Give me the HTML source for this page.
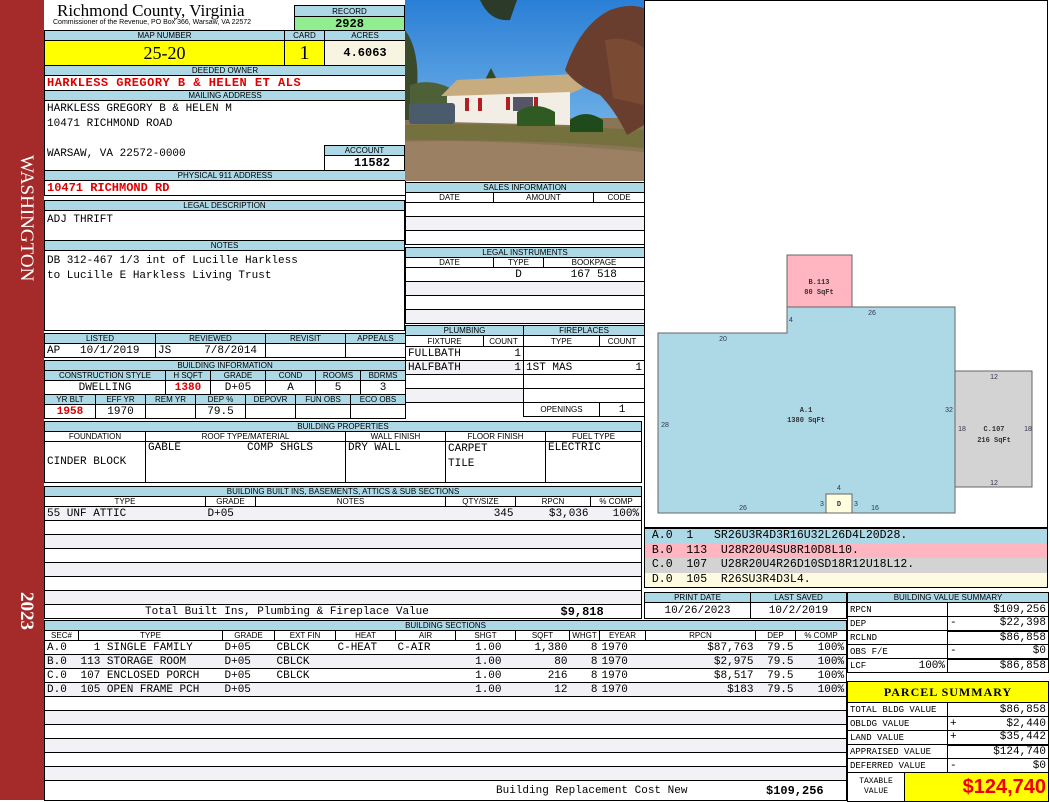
<!DOCTYPE html>
<html><head><meta charset="utf-8"><style>
*{margin:0;padding:0;box-sizing:border-box}
body{width:1050px;height:800px;position:relative;background:#fff;overflow:hidden;font-family:"Liberation Mono",monospace;font-size:11px;color:#000}
.a{position:absolute}
table{position:absolute;border-collapse:collapse;table-layout:fixed}
td{border:1px solid #000;padding:0 2px;overflow:hidden;white-space:nowrap;font-family:"Liberation Mono",monospace;font-size:11px;line-height:12px;vertical-align:middle}
tr.h td,td.h{background:#add8e6;font:8px/9px "Liberation Sans",sans-serif;text-align:center;padding:0}
.r{text-align:right}.c{text-align:center}
.red{color:#d00;font-weight:bold}
.g td{background:#f1f1f6}
.bs td{border-left:0;border-right:0}
.bs td:first-child{border-left:1px solid #000}
.bs td:last-child{border-right:1px solid #000}
</style></head><body>
<div class="a" style="left:0;top:0;width:44px;height:800px;background:#a52a2a"></div>
<div class="a" style="left:8px;top:155px;width:30px;height:170px;"><div style="transform:rotate(90deg);transform-origin:0 0;position:absolute;left:29px;top:0;width:170px;color:#fff;font:19px 'Liberation Serif',serif;white-space:nowrap">WASHINGTON</div></div>
<div class="a" style="left:8px;top:592px;width:30px;height:40px;"><div style="transform:rotate(90deg);transform-origin:0 0;position:absolute;left:29px;top:0;color:#fff;font:bold 19px 'Liberation Serif',serif;white-space:nowrap">2023</div></div>

<div class="a" style="left:57px;top:1px;font:17px 'Liberation Serif',serif">Richmond County, Virginia</div>
<div class="a" style="left:53px;top:19px;font:7px 'Liberation Sans',sans-serif;white-space:nowrap">Commissioner of the Revenue, PO Box 366, Warsaw, VA 22572</div>
<table style="left:294px;top:5px;width:111px"><tr class="h" style="height:11px"><td>RECORD</td></tr><tr style="height:14px"><td class="c" style="background:#90ee90;font-weight:bold;font-size:12px">2928</td></tr></table>

<table style="left:44px;top:30px;width:361px">
<colgroup><col style="width:240px"><col style="width:40px"><col style="width:81px"></colgroup>
<tr class="h" style="height:10px"><td>MAP NUMBER</td><td>CARD</td><td>ACRES</td></tr>
<tr style="height:25px"><td class="c" style="background:#ff0;font:18px 'Liberation Serif',serif">25-20</td><td class="c" style="background:#ff0;font:20px 'Liberation Serif',serif">1</td><td class="c" style="background:#f7f5e2;font-weight:bold;font-size:12px">4.6063</td></tr>
<tr class="h" style="height:10px"><td colspan="3">DEEDED OWNER</td></tr>
<tr style="height:15px"><td colspan="3" class="red" style="font-size:12px;letter-spacing:.5px">HARKLESS GREGORY B &amp; HELEN ET ALS</td></tr>
<tr class="h" style="height:10px"><td colspan="3">MAILING ADDRESS</td></tr>
<tr style="height:70px"><td colspan="3"></td></tr>
<tr class="h" style="height:10px"><td colspan="3">PHYSICAL 911 ADDRESS</td></tr>
<tr style="height:15px"><td colspan="3" class="red" style="font-size:12px">10471 RICHMOND RD</td></tr>
</table>
<div class="a" style="left:47px;top:102px;line-height:15px;white-space:pre">HARKLESS GREGORY B &amp; HELEN M
10471 RICHMOND ROAD

WARSAW, VA 22572-0000</div>
<table style="left:324px;top:145px;width:81px"><tr class="h" style="height:10px"><td>ACCOUNT</td></tr><tr style="height:15px"><td class="r" style="font-weight:bold;font-size:12px;padding-right:14px">11582</td></tr></table>

<table style="left:44px;top:200px;width:361px">
<tr class="h" style="height:10px"><td>LEGAL DESCRIPTION</td></tr>
<tr style="height:30px"><td style="vertical-align:top;padding-top:3px">ADJ THRIFT</td></tr>
<tr class="h" style="height:10px"><td>NOTES</td></tr>
<tr style="height:80px"><td style="vertical-align:top;padding-top:3px;line-height:15px">DB 312-467 1/3 int of Lucille Harkless<br>to Lucille E Harkless Living Trust</td></tr>
</table>

<table style="left:44px;top:333px;width:361px">
<colgroup><col style="width:111px"><col style="width:110px"><col style="width:80px"><col style="width:60px"></colgroup>
<tr class="h" style="height:10px"><td>LISTED</td><td>REVIEWED</td><td>REVISIT</td><td>APPEALS</td></tr>
<tr style="height:14px"><td>AP&nbsp;&nbsp;&nbsp;10/1/2019</td><td>JS&nbsp;&nbsp;&nbsp;&nbsp;&nbsp;7/8/2014</td><td></td><td></td></tr>
</table>

<table style="left:44px;top:360px;width:361px">
<colgroup><col style="width:121px"><col style="width:45px"><col style="width:55px"><col style="width:50px"><col style="width:45px"><col style="width:45px"></colgroup>
<tr class="h" style="height:10px"><td colspan="6">BUILDING INFORMATION</td></tr>
<tr class="h" style="height:10px"><td>CONSTRUCTION STYLE</td><td>H SQFT</td><td>GRADE</td><td>COND</td><td>ROOMS</td><td>BDRMS</td></tr>
<tr style="height:14px"><td class="c">DWELLING</td><td class="c red">1380</td><td class="c">D+05</td><td class="c">A</td><td class="c">5</td><td class="c">3</td></tr>
</table>
<table style="left:44px;top:394px;width:361px">
<colgroup><col style="width:51px"><col style="width:50px"><col style="width:50px"><col style="width:50px"><col style="width:50px"><col style="width:55px"><col style="width:55px"></colgroup>
<tr class="h" style="height:10px"><td>YR BLT</td><td>EFF YR</td><td>REM YR</td><td>DEP %</td><td>DEPOVR</td><td>FUN OBS</td><td>ECO OBS</td></tr>
<tr style="height:14px"><td class="c red">1958</td><td class="c">1970</td><td></td><td class="c">79.5</td><td></td><td></td><td></td></tr>
</table>

<!-- photo -->
<svg class="a" style="left:405px;top:0" width="239" height="181" viewBox="0 0 239 181">
<defs><linearGradient id="sk" x1="0" y1="0" x2="0" y2="1"><stop offset="0" stop-color="#2a7fd6"/><stop offset="1" stop-color="#8cc4ee"/></linearGradient></defs>
<rect width="239" height="181" fill="url(#sk)"/>
<rect y="118" width="239" height="63" fill="#8a7556"/>
<path d="M0 125 Q80 122 239 130 L239 148 Q150 140 0 140Z" fill="#75713e"/>
<path d="M0 142 Q80 138 239 152 L239 181 L0 181Z" fill="#9c8063"/>
<path d="M0 30 Q15 50 12 90 L5 120 L0 120Z" fill="#3a4a2a"/>
<path d="M5 85 Q25 78 45 88 L45 112 L5 112Z" fill="#4d6038"/>
<path d="M80 80 L86 68 L92 80 Z" fill="#2f4a28"/>
<path d="M75 0 Q85 22 105 20 L112 0Z" fill="#2c3a2a"/>
<polygon points="36,96 52,80 170,74 178,88 160,96" fill="#c6ac7e"/>
<polygon points="42,96 165,92 165,125 42,122" fill="#f2eee6"/>
<rect x="60" y="98" width="4" height="13" fill="#b02020"/><rect x="73" y="98" width="4" height="13" fill="#b02020"/>
<rect x="101" y="97" width="4" height="13" fill="#b02020"/><rect x="129" y="97" width="4" height="13" fill="#b02020"/>
<rect x="108" y="97" width="20" height="14" fill="#556"/>
<rect x="4" y="103" width="46" height="21" rx="3" fill="#4a5c6c"/>
<path d="M112 112 Q130 100 150 112 L150 126 L112 126Z" fill="#2f5a22"/>
<path d="M165 120 Q180 108 198 120 L198 132 L165 132Z" fill="#1f4a1c"/>
<path d="M160 70 Q175 25 205 10 Q225 3 239 8 L239 125 L222 135 Q210 110 195 95 Q170 85 160 70Z" fill="#6a3e2e"/>
<path d="M200 40 Q222 35 239 48 L239 105 L208 98Z" fill="#7a4a32"/>
</svg>

<table style="left:405px;top:182px;width:239px">
<colgroup><col style="width:88px"><col style="width:100px"><col style="width:51px"></colgroup>
<tr class="h" style="height:10px"><td colspan="3">SALES INFORMATION</td></tr>
<tr class="h" style="height:10px;"><td style="background:#fff">DATE</td><td style="background:#fff">AMOUNT</td><td style="background:#fff">CODE</td></tr>
<tr style="height:14px"><td colspan="3"></td></tr>
<tr class="g" style="height:14px"><td colspan="3"></td></tr>
<tr style="height:14px"><td colspan="3"></td></tr>
</table>
<table style="left:405px;top:247px;width:239px">
<colgroup><col style="width:88px"><col style="width:50px"><col style="width:101px"></colgroup>
<tr class="h" style="height:10px"><td colspan="3">LEGAL INSTRUMENTS</td></tr>
<tr class="h" style="height:10px"><td style="background:#fff">DATE</td><td style="background:#fff">TYPE</td><td style="background:#fff">BOOKPAGE</td></tr>
<tr style="height:14px"><td style="border-right:0"></td><td class="c" style="border-right:0;border-left:0">D</td><td class="c" style="border-left:0">167 518</td></tr>
<tr class="g" style="height:14px"><td colspan="3"></td></tr>
<tr style="height:14px"><td colspan="3"></td></tr>
<tr class="g" style="height:14px"><td colspan="3"></td></tr>
</table>
<table style="left:405px;top:325px;width:118px">
<colgroup><col style="width:78px"><col style="width:40px"></colgroup>
<tr class="h" style="height:10px"><td colspan="2">PLUMBING</td></tr>
<tr class="h" style="height:11px"><td style="background:#fff">FIXTURE</td><td style="background:#fff">COUNT</td></tr>
<tr style="height:14px"><td style="border-right:0">FULLBATH</td><td class="r" style="border-left:0">1</td></tr>
<tr class="g" style="height:14px"><td style="border-right:0">HALFBATH</td><td class="r" style="border-left:0">1</td></tr>
<tr style="height:14px"><td colspan="2"></td></tr>
<tr class="g" style="height:14px"><td colspan="2"></td></tr>
<tr style="height:14px"><td colspan="2" style="border:0"></td></tr>
</table>
<table style="left:523px;top:325px;width:121px">
<colgroup><col style="width:76px"><col style="width:45px"></colgroup>
<tr class="h" style="height:10px"><td colspan="2">FIREPLACES</td></tr>
<tr class="h" style="height:11px"><td style="background:#fff">TYPE</td><td style="background:#fff">COUNT</td></tr>
<tr style="height:14px"><td colspan="2"></td></tr>
<tr style="height:14px"><td style="border-right:0">1ST MAS</td><td class="r" style="border-left:0">1</td></tr>
<tr style="height:14px"><td colspan="2"></td></tr>
<tr style="height:14px"><td colspan="2"></td></tr>
<tr style="height:14px"><td class="h" style="background:#fff">OPENINGS</td><td class="c">1</td></tr>
</table>

<table style="left:44px;top:421px;width:597px">
<colgroup><col style="width:101px"><col style="width:200px"><col style="width:100px"><col style="width:100px"><col style="width:96px"></colgroup>
<tr class="h" style="height:10px"><td colspan="5">BUILDING PROPERTIES</td></tr>
<tr class="h" style="height:10px"><td style="background:#fff">FOUNDATION</td><td style="background:#fff">ROOF TYPE/MATERIAL</td><td style="background:#fff">WALL FINISH</td><td style="background:#fff">FLOOR FINISH</td><td style="background:#fff">FUEL TYPE</td></tr>
<tr style="height:41px"><td>CINDER BLOCK</td><td style="vertical-align:top;white-space:pre">GABLE          COMP SHGLS</td><td style="vertical-align:top">DRY WALL</td><td style="vertical-align:top;line-height:15px">CARPET<br>TILE</td><td style="vertical-align:top">ELECTRIC</td></tr>
</table>

<table style="left:44px;top:486px;width:597px">
<colgroup><col style="width:161px"><col style="width:50px"><col style="width:190px"><col style="width:70px"><col style="width:75px"><col style="width:51px"></colgroup>
<tr class="h" style="height:10px"><td colspan="6">BUILDING BUILT INS, BASEMENTS, ATTICS &amp; SUB SECTIONS</td></tr>
<tr class="h" style="height:10px"><td style="background:#fff">TYPE</td><td style="background:#fff">GRADE</td><td style="background:#fff">NOTES</td><td style="background:#fff">QTY/SIZE</td><td style="background:#fff">RPCN</td><td style="background:#fff">% COMP</td></tr>
<tr class="g" style="height:14px"><td style="border-right:0">55 UNF ATTIC</td><td colspan="2" style="border-left:0;border-right:0">D+05</td><td class="r" style="border-left:0;border-right:0">345</td><td class="r" style="border-left:0;border-right:0">$3,036</td><td class="r" style="border-left:0">100%</td></tr>
<tr style="height:14px"><td colspan="6"></td></tr>
<tr class="g" style="height:14px"><td colspan="6"></td></tr>
<tr style="height:14px"><td colspan="6"></td></tr>
<tr class="g" style="height:14px"><td colspan="6"></td></tr>
<tr style="height:14px"><td colspan="6"></td></tr>
<tr class="g" style="height:14px"><td colspan="6"></td></tr>
<tr style="height:14px"><td colspan="4" style="border-right:0;padding-left:100px">Total Built Ins, Plumbing &amp; Fireplace Value</td><td colspan="2" style="border-left:0;font-weight:bold;font-size:12px;padding-left:45px">$9,818</td></tr>
</table>

<table class="bs" style="left:44px;top:620px;width:802px">
<colgroup><col style="width:34px"><col style="width:144px"><col style="width:52px"><col style="width:61px"><col style="width:60px"><col style="width:60px"><col style="width:60px"><col style="width:54px"><col style="width:30px"><col style="width:46px"><col style="width:110px"><col style="width:40px"><col style="width:51px"></colgroup>
<tr class="h" style="height:10px"><td colspan="13" style="border:1px solid #000">BUILDING SECTIONS</td></tr>
<tr class="h" style="height:10px"><td style="background:#fff;border:1px solid #000">SEC#</td><td style="background:#fff;border:1px solid #000">TYPE</td><td style="background:#fff;border:1px solid #000">GRADE</td><td style="background:#fff;border:1px solid #000">EXT FIN</td><td style="background:#fff;border:1px solid #000">HEAT</td><td style="background:#fff;border:1px solid #000">AIR</td><td style="background:#fff;border:1px solid #000">SHGT</td><td style="background:#fff;border:1px solid #000">SQFT</td><td style="background:#fff;border:1px solid #000">WHGT</td><td style="background:#fff;border:1px solid #000">EYEAR</td><td style="background:#fff;border:1px solid #000">RPCN</td><td style="background:#fff;border:1px solid #000">DEP</td><td style="background:#fff;border:1px solid #000">% COMP</td></tr>
<tr style="height:14px"><td>A.0</td><td style="white-space:pre">  1 SINGLE FAMILY</td><td>D+05</td><td>CBLCK</td><td>C-HEAT</td><td>C-AIR</td><td class="r" style="padding-right:14px">1.00</td><td class="r">1,380</td><td class="r">8</td><td>1970</td><td class="r">$87,763</td><td class="r">79.5</td><td class="r">100%</td></tr>
<tr class="g" style="height:14px"><td>B.0</td><td>113 STORAGE ROOM</td><td>D+05</td><td>CBLCK</td><td></td><td></td><td class="r" style="padding-right:14px">1.00</td><td class="r">80</td><td class="r">8</td><td>1970</td><td class="r">$2,975</td><td class="r">79.5</td><td class="r">100%</td></tr>
<tr style="height:14px"><td>C.0</td><td>107 ENCLOSED PORCH</td><td>D+05</td><td>CBLCK</td><td></td><td></td><td class="r" style="padding-right:14px">1.00</td><td class="r">216</td><td class="r">8</td><td>1970</td><td class="r">$8,517</td><td class="r">79.5</td><td class="r">100%</td></tr>
<tr class="g" style="height:14px"><td>D.0</td><td>105 OPEN FRAME PCH</td><td>D+05</td><td></td><td></td><td></td><td class="r" style="padding-right:14px">1.00</td><td class="r">12</td><td class="r">8</td><td>1970</td><td class="r">$183</td><td class="r">79.5</td><td class="r">100%</td></tr>
<tr style="height:14px"><td colspan="13"></td></tr>
<tr class="g" style="height:14px"><td colspan="13"></td></tr>
<tr style="height:14px"><td colspan="13"></td></tr>
<tr class="g" style="height:14px"><td colspan="13"></td></tr>
<tr style="height:14px"><td colspan="13"></td></tr>
<tr class="g" style="height:14px"><td colspan="13"></td></tr>
<tr style="height:20px"><td colspan="13"></td></tr>
</table>
<div class="a" style="left:496px;top:785px;white-space:pre">Building Replacement Cost New</div>
<div class="a" style="left:766px;top:784px;font-weight:bold;font-size:12px">$109,256</div>

<!-- sketch -->
<div class="a" style="left:644px;top:0;width:404px;height:528px;border:1px solid #000"></div>
<svg class="a" style="left:644px;top:0" width="404" height="528" viewBox="644 0 404 528" font-family="Liberation Sans, sans-serif">
<rect x="787" y="255" width="65" height="52" fill="#ffb6c1" stroke="#666"/>
<polygon points="658,333 787,333 787,307 955,307 955,513 658,513" fill="#add8e6" stroke="#666"/>
<rect x="955" y="371" width="77" height="116" fill="#d3d3d3" stroke="#666"/>
<rect x="826" y="494" width="26" height="19" fill="#ffffe0" stroke="#666"/>
<g font-size="7" fill="#333" font-family="Liberation Mono, monospace" font-weight="bold" text-anchor="middle">
<text x="819" y="284">B.113</text><text x="819" y="294">80 SqFt</text>
<text x="806" y="412">A.1</text><text x="806" y="422">1380 SqFt</text>
<text x="994" y="431">C.107</text><text x="994" y="442">216 SqFt</text>
<text x="839" y="506">D</text></g>
<g font-size="7" fill="#335" text-anchor="middle">
<text x="872" y="315">26</text><text x="791" y="322">4</text><text x="723" y="341">20</text><text x="665" y="427">28</text>
<text x="949" y="412">32</text><text x="962" y="431">18</text><text x="1028" y="431">18</text>
<text x="994" y="379">12</text><text x="994" y="485">12</text>
<text x="839" y="490">4</text><text x="822" y="506">3</text><text x="856" y="506">3</text>
<text x="743" y="510">26</text><text x="875" y="510">16</text></g>
</svg>
<div class="a" style="left:644px;top:528px;width:404px;height:60px;border:1px solid #000"></div>
<div class="a" style="left:645px;top:529px;width:402px;line-height:14.5px;white-space:pre;font-size:11.5px"><div style="background:#add8e6;height:14.5px"> A.0  1   SR26U3R4D3R16U32L26D4L20D28.</div><div style="background:#ffb6c1;height:14.5px"> B.0  113  U28R20U4SU8R10D8L10.</div><div style="background:#d3d3d3;height:14.5px"> C.0  107  U28R20U4R26D10SD18R12U18L12.</div><div style="background:#fffbe0;height:14.5px"> D.0  105  R26SU3R4D3L4.</div></div>

<table style="left:644px;top:592px;width:202px">
<colgroup><col style="width:106px"><col style="width:96px"></colgroup>
<tr class="h" style="height:10px"><td>PRINT DATE</td><td>LAST SAVED</td></tr>
<tr style="height:16px"><td class="c">10/26/2023</td><td class="c">10/2/2019</td></tr>
</table>

<table style="left:847px;top:592px;width:201px">
<colgroup><col style="width:100px"><col style="width:101px"></colgroup>
<tr class="h" style="height:10px"><td colspan="2">BUILDING VALUE SUMMARY</td></tr>
<tr style="height:14px"><td style="font-size:9px">RPCN</td><td class="r">$109,256</td></tr>
<tr style="height:14px"><td style="font-size:9px">DEP</td><td class="r" style="border-bottom:2px solid #000"><span style="float:left">-</span>$22,398</td></tr>
<tr style="height:14px"><td style="font-size:9px">RCLND</td><td class="r">$86,858</td></tr>
<tr style="height:14px"><td style="font-size:9px">OBS F/E</td><td class="r" style="border-bottom:2px solid #000"><span style="float:left">-</span>$0</td></tr>
<tr style="height:14px"><td style="font-size:9px">LCF<span style="float:right;font-size:11px">100%</span></td><td class="r">$86,858</td></tr>
</table>

<table style="left:847px;top:681px;width:201px">
<colgroup><col style="width:57px"><col style="width:43px"><col style="width:101px"></colgroup>
<tr style="height:21px"><td colspan="3" class="c" style="background:#ff0;font-weight:bold;font-size:12px;font-family:'Liberation Serif',serif;letter-spacing:1px">PARCEL SUMMARY</td></tr>
<tr style="height:14px"><td colspan="2" style="font-size:9px">TOTAL BLDG VALUE</td><td class="r">$86,858</td></tr>
<tr style="height:14px"><td colspan="2" style="font-size:9px">OBLDG VALUE</td><td class="r"><span style="float:left">+</span>$2,440</td></tr>
<tr style="height:14px"><td colspan="2" style="font-size:9px">LAND VALUE</td><td class="r" style="border-bottom:2px solid #000"><span style="float:left">+</span>$35,442</td></tr>
<tr style="height:14px"><td colspan="2" style="font-size:9px">APPRAISED VALUE</td><td class="r">$124,740</td></tr>
<tr style="height:14px"><td colspan="2" style="font-size:9px">DEFERRED VALUE</td><td class="r"><span style="float:left">-</span>$0</td></tr>
<tr style="height:29px"><td class="c" style="font-size:8px;line-height:10px">TAXABLE<br>VALUE</td><td colspan="2" class="r" style="background:#ff0;color:#e00;font:bold 20px 'Liberation Sans',sans-serif">$124,740</td></tr>
</table>
</body></html>
